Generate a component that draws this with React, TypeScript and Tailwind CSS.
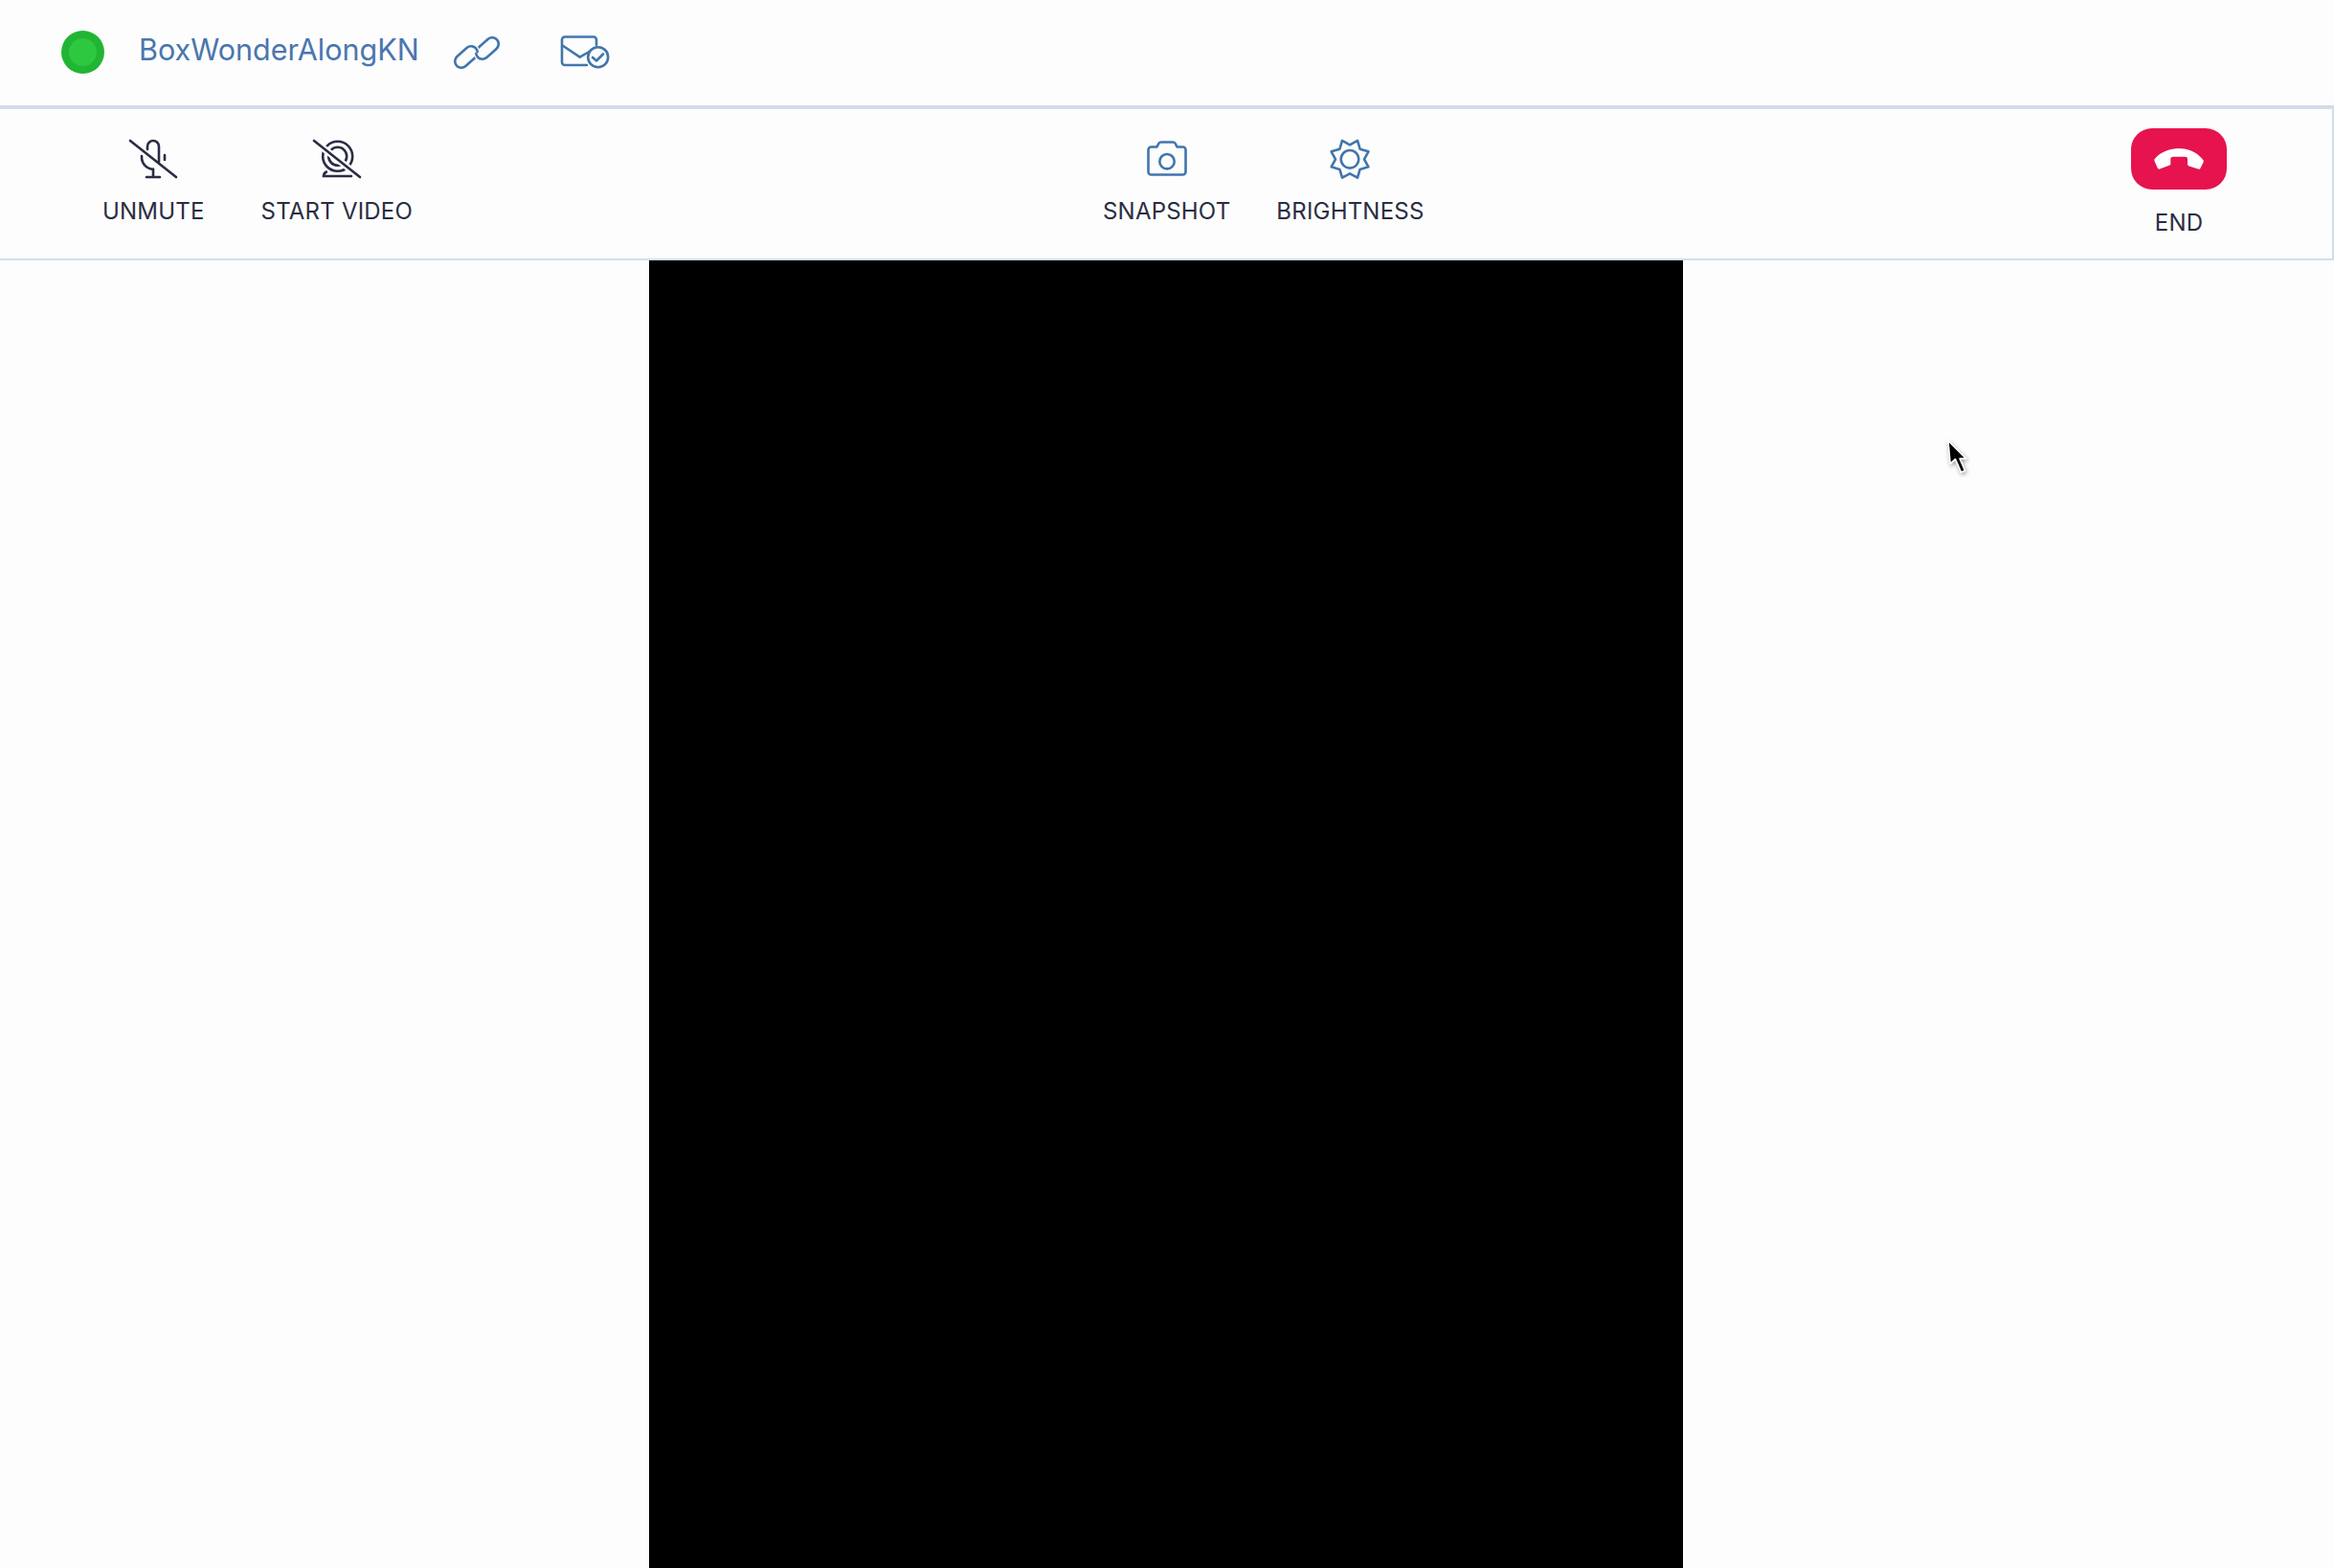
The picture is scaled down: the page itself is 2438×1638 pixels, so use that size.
const ink = "#2a2d42";
const blue = "#4275ab";
const page = "#fdfdfe";

function MicOff() {
  return (
    <svg width="52" height="44" viewBox="0 0 52 44" fill="none" stroke={ink} strokeWidth="2.600" strokeLinecap="round">
      <path d="M2 2 50 40" />
      <path d="M20 11V8a6 6 0 0 1 12 0v16" />
      <path d="M14 18v1a12.500 12.500 0 0 0 12 12.700" />
      <path d="M38 17v5" />
      <path d="M26 32v8M19 40h14" />
    </svg>
  );
}

function VideoOff() {
  return (
    <svg width="52" height="44" viewBox="0 0 52 44" fill="none" stroke={ink} strokeWidth="2.600" strokeLinecap="round">
      <circle cx="26.700" cy="18.300" r="15.500" />
      <circle cx="26.700" cy="18.300" r="9.500" />
      <path d="M2 2 50 40" stroke={page} strokeWidth="7" />
      <path d="M2 2 50 40" />
      <path d="M15 34.500c-2 1-3 2.500-3 4.500h29" />
    </svg>
  );
}

function LinkIcon() {
  const first = <rect x="-0.500" y="14.800" width="27" height="13.400" rx="6.700" transform="rotate(-42 13 21.500)" />;
  const second = <rect x="21.500" y="5.800" width="27" height="13.400" rx="6.700" transform="rotate(-42 35 12.500)" />;
  return (
    <svg width="48" height="34" viewBox="0 0 48 34" fill="none" stroke={blue} strokeWidth="2.600">
      <defs>
        <clipPath id="link-over">
          <rect x="19" y="9" width="10" height="8" />
        </clipPath>
      </defs>
      {first}
      <g stroke={page} strokeWidth="5.500">{second}</g>
      {second}
      <g clipPath="url(#link-over)">
        <g stroke={page} strokeWidth="5.500">{first}</g>
        {first}
      </g>
    </svg>
  );
}

function MailCheck() {
  return (
    <svg width="52" height="36" viewBox="0 0 52 36" fill="none" stroke={blue} strokeWidth="2.600" strokeLinecap="round" strokeLinejoin="round">
      <path d="M28 31H5a3 3 0 0 1-3-3V4.500a3 3 0 0 1 3-3h30a3 3 0 0 1 3 3V10" />
      <path d="M2.500 10.500 20.700 22.700 30.500 17" />
      <circle cx="39.700" cy="22.700" r="10.500" />
      <path d="M34 23l4 3.500 7-7" />
    </svg>
  );
}

function CameraIcon() {
  return (
    <svg width="44" height="44" viewBox="0 0 44 44" fill="none" stroke={blue} strokeWidth="2.600" strokeLinejoin="round">
      <path d="M5.500 8.500h6l1.600-3.300a3 3 0 0 1 2.600-1.700h12.600a3 3 0 0 1 2.600 1.700l1.600 3.300h6a3 3 0 0 1 3 3v23a3 3 0 0 1-3 3h-33a3 3 0 0 1-3-3v-23a3 3 0 0 1 3-3z" />
      <circle cx="22" cy="23.700" r="7.700" />
    </svg>
  );
}

function SunIcon() {
  return (
    <svg width="48" height="44" viewBox="0 2.700 48 44" fill="none" stroke={blue} strokeWidth="2.600" strokeLinejoin="round">
      <polygon points="24,9 32,4.600 34.600,13.400 43.400,16 39,24 43.400,32 34.600,34.600 32,43.400 24,39 16,43.400 13.400,34.600 4.600,32 9,24 4.600,16 13.400,13.400 16,4.600" />
      <circle cx="24" cy="24" r="9.300" />
    </svg>
  );
}

function HangUp() {
  return (
    <svg width="52" height="22" viewBox="0 0 52 22" fill="#ffffff">
      <path d="M0.700 11C7 3.500 17 0 26 0s19 3.500 25.700 12.700c.5.900-.2 2-1 3.500l-2 4c-.6 1.300-1.500 1.700-2.700 1.400l-9.500-3c-1.200-.4-1.500-1.200-1.500-2.500V11c0-1.500-1-2.300-2.500-2.300H20c-1.500 0-2.700.8-2.700 2.300v5c0 1-.3 1.400-1.300 1.800L6 21.600c-1 .3-1.800 0-2.300-1L.8 14c-.5-1.200-.6-2.200-.1-3z" />
    </svg>
  );
}

function Cursor() {
  return (
    <svg width="28" height="40" viewBox="0 0 24 36" className="absolute left-[2032px] top-[458px] drop-shadow-[1px_2px_2px_rgba(0,0,0,0.35)]">
      <path d="M2 2 4 24 8.800 19.500 14.300 32 18 30.200 13 19 19 19z" fill="#000000" stroke="#ffffff" strokeWidth="1.500" strokeLinejoin="round" />
    </svg>
  );
}

function Tool({ icon, label }: { icon: React.ReactNode; label: string }) {
  return (
    <div className="flex flex-col items-center pt-[31px]">
      <div className="flex h-[44px] items-center justify-center">{icon}</div>
      <span className="mt-[16px] text-[24px] leading-[32px] tracking-[0.2px] whitespace-nowrap text-[#2a2d42]">{label}</span>
    </div>
  );
}

export default function App() {
  return (
    <div className="relative flex h-[1638px] flex-col overflow-hidden bg-[#fdfdfe] font-['Inter','Liberation_Sans',sans-serif]">
      <header className="flex h-[114px] shrink-0 items-center border-b-4 border-[#d4dcea] pb-[1px]">
        <div className="ml-[64px] flex h-[45px] w-[45px] items-center justify-center rounded-full bg-[#22b533]">
          <div className="h-[29px] w-[29px] rounded-full bg-[#2ec840]" />
        </div>
        <span className="ml-[36px] -translate-y-[3px] text-[30.500px] leading-[40px] text-[#4a76ad]">BoxWonderAlongKN</span>
        <div className="ml-[36px] flex items-center">
          <LinkIcon />
        </div>
        <div className="ml-[63px] flex items-center">
          <MailCheck />
        </div>
      </header>

      <section className="flex h-[158px] shrink-0 items-start border-r-2 border-b-2 border-[#d4dcea] pl-[107px] pr-[110px]">
        <div className="flex w-[1045px] gap-[59px]">
          <Tool icon={<MicOff />} label="UNMUTE" />
          <Tool icon={<VideoOff />} label="START VIDEO" />
        </div>
        <div className="flex gap-[48px]">
          <Tool icon={<CameraIcon />} label="SNAPSHOT" />
          <Tool icon={<SunIcon />} label="BRIGHTNESS" />
        </div>
        <div className="ml-auto flex w-[100px] flex-col items-center pt-[20px]">
          <div className="flex h-[64px] w-[100px] items-center justify-center rounded-[22px] bg-[#e6134f]">
            <HangUp />
          </div>
          <span className="mt-[19px] text-[24px] leading-[32px] tracking-[0.2px] text-[#2a2d42]">END</span>
        </div>
      </section>

      <main className="flex min-h-0 flex-1 justify-center">
        <div className="h-full w-[1080px] -translate-x-[1px] bg-black" />
      </main>

      <Cursor />
    </div>
  );
}
